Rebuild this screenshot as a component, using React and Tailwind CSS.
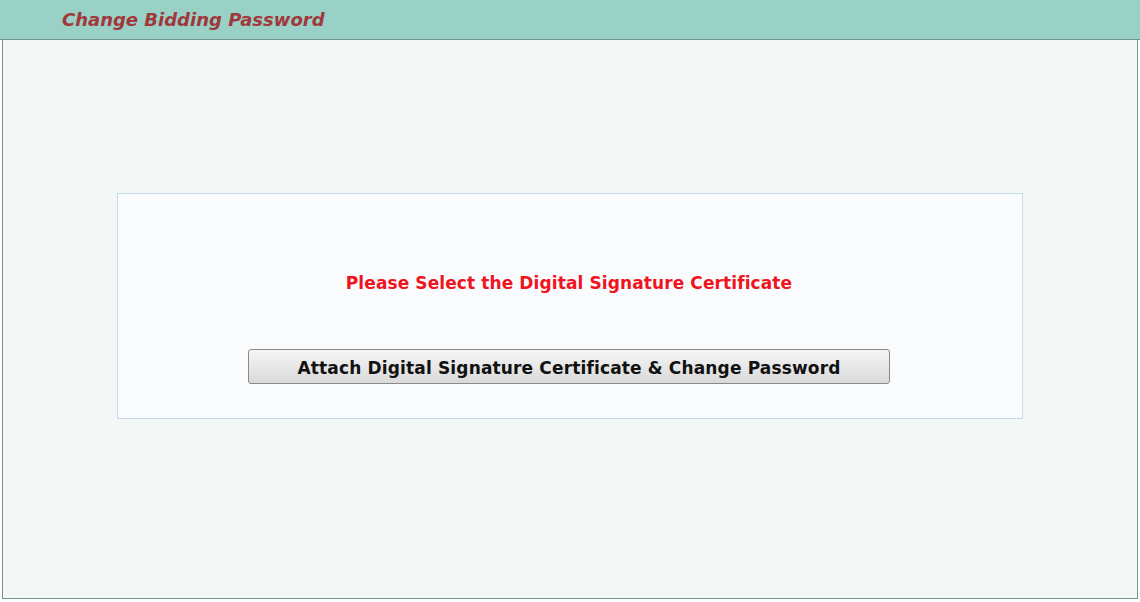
export default function App() {
  return (
    <div className="w-[1140px] h-[602px] bg-white font-['DejaVu_Sans',Verdana,sans-serif]">
      <div className="h-[40px] bg-[#99d1c6] border-b border-[#6f978e] flex items-center pl-[62px]">
        <h1 className="text-[18px] font-bold italic text-[#a0383c] leading-none">Change Bidding Password</h1>
      </div>
      <div className="ml-[2px] mr-[2px] h-[559px] bg-[#f3f8f7] border-l border-r border-b border-[#6f978e] pt-[153px] pl-[114px]">
        <div className="w-[906px] h-[226px] border border-[#c4dbe9] bg-[#f9fbfd] flex flex-col items-start pt-[77px]">
          <p className="self-center ml-[-2px] text-[17px] leading-[24px] font-bold text-[#f0141e] tracking-[0.1px]">Please Select the Digital Signature Certificate</p>
          <button className="ml-[130px] mt-[54px] w-[642px] h-[35px] pt-[4px] rounded-[3px] border border-[#8a8a8a] bg-gradient-to-b from-[#f6f6f6] to-[#d9d9d9] text-[17px] font-bold text-[#111] tracking-[0.15px]">
            Attach Digital Signature Certificate &amp; Change Password
          </button>
        </div>
      </div>
    </div>
  );
}
